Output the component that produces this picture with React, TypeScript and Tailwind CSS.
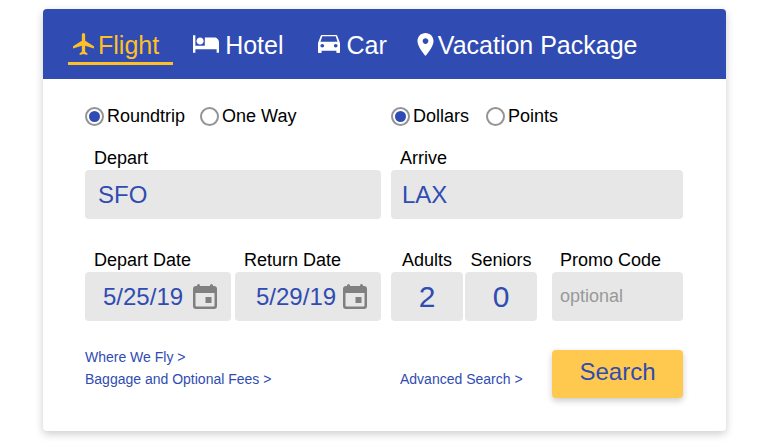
import { ReactNode, useState } from "react";

interface TabItem {
  name: string;
  icon: ReactNode;
  spacing: string;
}

const PlaneIcon = () => (
  <svg viewBox="2 2 19 20" className="w-[21px] h-[22px] mb-0.5" fill="currentColor" aria-hidden="true">
    <path d="M21 16v-2l-8-5V3.5c0-.83-.67-1.5-1.5-1.5S10 2.67 10 3.5V9l-8 5v2l8-2.5V19l-2 1.5V22l3.5-1 3.5 1v-1.5L13 19v-5.5l8 2.5z" />
  </svg>
);

const BedIcon = () => (
  <svg viewBox="1 5 22 15" className="w-[26px] h-[18px] mb-0.5" fill="currentColor" aria-hidden="true">
    <path d="M7 13c1.66 0 3-1.34 3-3S8.66 7 7 7s-3 1.34-3 3 1.34 3 3 3zm12-6h-8v7H3V5H1v15h2v-3h18v3h2v-9c0-2.21-1.79-4-4-4z" />
  </svg>
);

const CarIcon = () => (
  <svg
    viewBox="3 5 18 16"
    preserveAspectRatio="none"
    className="w-[22px] h-[18px] mb-0.5"
    fill="currentColor"
    aria-hidden="true"
  >
    <path d="M18.92 6.01C18.72 5.42 18.16 5 17.5 5h-11c-.66 0-1.21.42-1.42 1.01L3 12v8c0 .55.45 1 1 1h1c.55 0 1-.45 1-1v-1h12v1c0 .55.45 1 1 1h1c.55 0 1-.45 1-1v-8l-2.08-5.99zM6.5 16c-.83 0-1.5-.67-1.5-1.5S5.67 13 6.5 13s1.5.67 1.5 1.5S7.33 16 6.5 16zm11 0c-.83 0-1.5-.67-1.5-1.5s.67-1.5 1.5-1.5 1.5.67 1.5 1.5-.67 1.5-1.5 1.5zM5 11l1.500-4.800h11L19 11H5z" />
  </svg>
);

const PinIcon = () => (
  <svg viewBox="5 2 14 20" className="w-[17px] h-[23px] mb-0.5" fill="currentColor" aria-hidden="true">
    <path d="M12 2C8.13 2 5 5.13 5 9c0 5.25 7 13 7 13s7-7.75 7-13c0-3.87-3.13-7-7-7zm0 9.5c-1.38 0-2.5-1.12-2.5-2.5s1.12-2.5 2.5-2.5 2.5 1.12 2.5 2.5-1.12 2.5-2.5 2.5z" />
  </svg>
);

const CalendarIcon = () => (
  <svg viewBox="0 0 24 25" className="w-6 h-[25px] shrink-0 text-[#808080]" aria-hidden="true">
    <rect x="4" y="0" width="3" height="5" rx="1.5" fill="currentColor" />
    <rect x="17" y="0" width="3" height="5" rx="1.5" fill="currentColor" />
    <path
      fill="currentColor"
      fillRule="evenodd"
      d="M3 2h18a3 3 0 0 1 3 3v17a3 3 0 0 1-3 3h-18a3 3 0 0 1-3-3v-17a3 3 0 0 1 3-3zM2.500 9v12.500a1 1 0 0 0 1 1h17a1 1 0 0 0 1-1V9z"
    />
    <path fill="currentColor" d="M12.500 13h6v6h-6z" />
  </svg>
);

const tabs: TabItem[] = [
  { name: "Flight", icon: <PlaneIcon />, spacing: "gap-1 pr-[14px]" },
  { name: "Hotel", icon: <BedIcon />, spacing: "gap-1.5 pr-[14px]" },
  { name: "Car", icon: <CarIcon />, spacing: "gap-[7px] pr-[10px]" },
  { name: "Vacation Package", icon: <PinIcon />, spacing: "gap-1" },
];

const RadioGroup = ({
  name,
  options,
  className,
}: {
  name: string;
  options: string[];
  className: string;
}) => {
  const [selected, setSelected] = useState(options[0]);

  return (
    <div role="radiogroup" aria-label={name} className={`flex ${className}`}>
      {options.map((option) => (
        <label key={option} className="flex items-center gap-[3px] text-lg leading-6">
          <input
            type="radio"
            name={name}
            checked={selected === option}
            onChange={() => setSelected(option)}
            className="grid place-content-center appearance-none w-[19px] h-[19px] rounded-full border-2 border-[#949494] bg-white checked:before:block checked:before:w-[11px] checked:before:h-[11px] checked:before:rounded-full checked:before:bg-[#304cb2]"
          />
          {option}
        </label>
      ))}
    </div>
  );
};

const Field = ({
  id,
  label,
  value,
  placeholder,
  className = "",
  labelClassName = "pl-[9px]",
  inputClassName = "text-2xl",
  icon,
}: {
  id: string;
  label: string;
  value?: string;
  placeholder?: string;
  className?: string;
  labelClassName?: string;
  inputClassName?: string;
  icon?: ReactNode;
}) => (
  <div className={`flex flex-col min-w-0 ${className}`}>
    <label htmlFor={id} className={`text-lg leading-6 ${labelClassName}`}>
      {label}
    </label>
    <div className="flex items-center h-[49px] rounded bg-[#e7e7e7] overflow-hidden">
      <input
        id={id}
        type="text"
        defaultValue={value}
        placeholder={placeholder}
        className={`w-full min-w-0 h-full bg-transparent text-[#304cb2] placeholder:text-[#999999] outline-none ${inputClassName}`}
      />
      {icon}
    </div>
  </div>
);

const App = () => {
  const [activeTab, setActiveTab] = useState("Flight");

  return (
    <main className="pl-[43px] pt-[9px] pb-[15px] pr-[42px] bg-white text-black font-['Liberation_Sans',Arial,sans-serif]">
      <div className="rounded bg-white shadow-[0_3px_8px_rgba(0,0,0,0.2)]">
        <nav className="flex gap-[15px] pt-[19px] pb-[14px] pl-[25px] rounded-t bg-[#304cb2]">
          {tabs.map(({ name, icon, spacing }) => (
            <button
              key={name}
              type="button"
              onClick={() => setActiveTab(name)}
              className={`flex items-center pl-[5px] border-b-3 text-[25px] leading-[34px] whitespace-nowrap ${spacing} ${
                activeTab === name
                  ? "text-[#ffbf27] border-[#ffbf27]"
                  : "text-white border-transparent"
              }`}
            >
              {icon}
              {name}
            </button>
          ))}
        </nav>
        <form
          onSubmit={(e) => e.preventDefault()}
          className="grid grid-cols-[296fr_292fr] gap-x-[10px] pl-[42px] pr-[43px] pt-[25px] pb-[33px]"
        >
          <RadioGroup name="Trip type" options={["Roundtrip", "One Way"]} className="gap-[15px]" />
          <RadioGroup name="Fare type" options={["Dollars", "Points"]} className="gap-[17px]" />

          <Field
            id="depart"
            label="Depart"
            value="SFO"
            className="mt-[18px]"
            inputClassName="pl-[13px] text-2xl"
          />
          <Field
            id="arrive"
            label="Arrive"
            value="LAX"
            className="mt-[18px]"
            inputClassName="pl-[11px] text-2xl"
          />

          <div className="grid grid-cols-2 gap-1 mt-[29px]">
            <Field
              id="depart-date"
              label="Depart Date"
              value="5/25/19"
              inputClassName="pl-[18px] text-2xl"
              icon={<div className="mr-[14px]"><CalendarIcon /></div>}
            />
            <Field
              id="return-date"
              label="Return Date"
              value="5/29/19"
              inputClassName="pl-[21px] text-2xl"
              icon={<div className="mr-[14px]"><CalendarIcon /></div>}
            />
          </div>
          <div className="flex mt-[29px]">
            <Field
              id="adults"
              label="Adults"
              value="2"
              className="w-[72px]"
              labelClassName="text-center"
              inputClassName="text-center text-3xl"
            />
            <Field
              id="seniors"
              label="Seniors"
              value="0"
              className="w-[72px] ml-0.5"
              labelClassName="text-center"
              inputClassName="text-center text-3xl"
            />
            <Field
              id="promo"
              label="Promo Code"
              placeholder="optional"
              className="flex-1 ml-[15px]"
              labelClassName="pl-2"
              inputClassName="pl-2 text-lg"
            />
          </div>

          <div className="flex flex-col items-start mt-[25px] text-sm leading-[22px] text-[#304cb2]">
            <a href="#where-we-fly">Where We Fly &gt;</a>
            <a href="#fees">Baggage and Optional Fees &gt;</a>
          </div>
          <div className="flex justify-between items-start mt-[29px] text-[#304cb2]">
            <a href="#advanced" className="mt-[18px] pl-[9px] text-sm leading-[22px]">
              Advanced Search &gt;
            </a>
            <button
              type="submit"
              className="w-[131px] h-12 pb-1 rounded-sm bg-[#ffc950] text-2xl shadow-[0_3px_6px_rgba(0,0,0,0.2)]"
            >
              Search
            </button>
          </div>
        </form>
      </div>
    </main>
  );
};

export default App;
